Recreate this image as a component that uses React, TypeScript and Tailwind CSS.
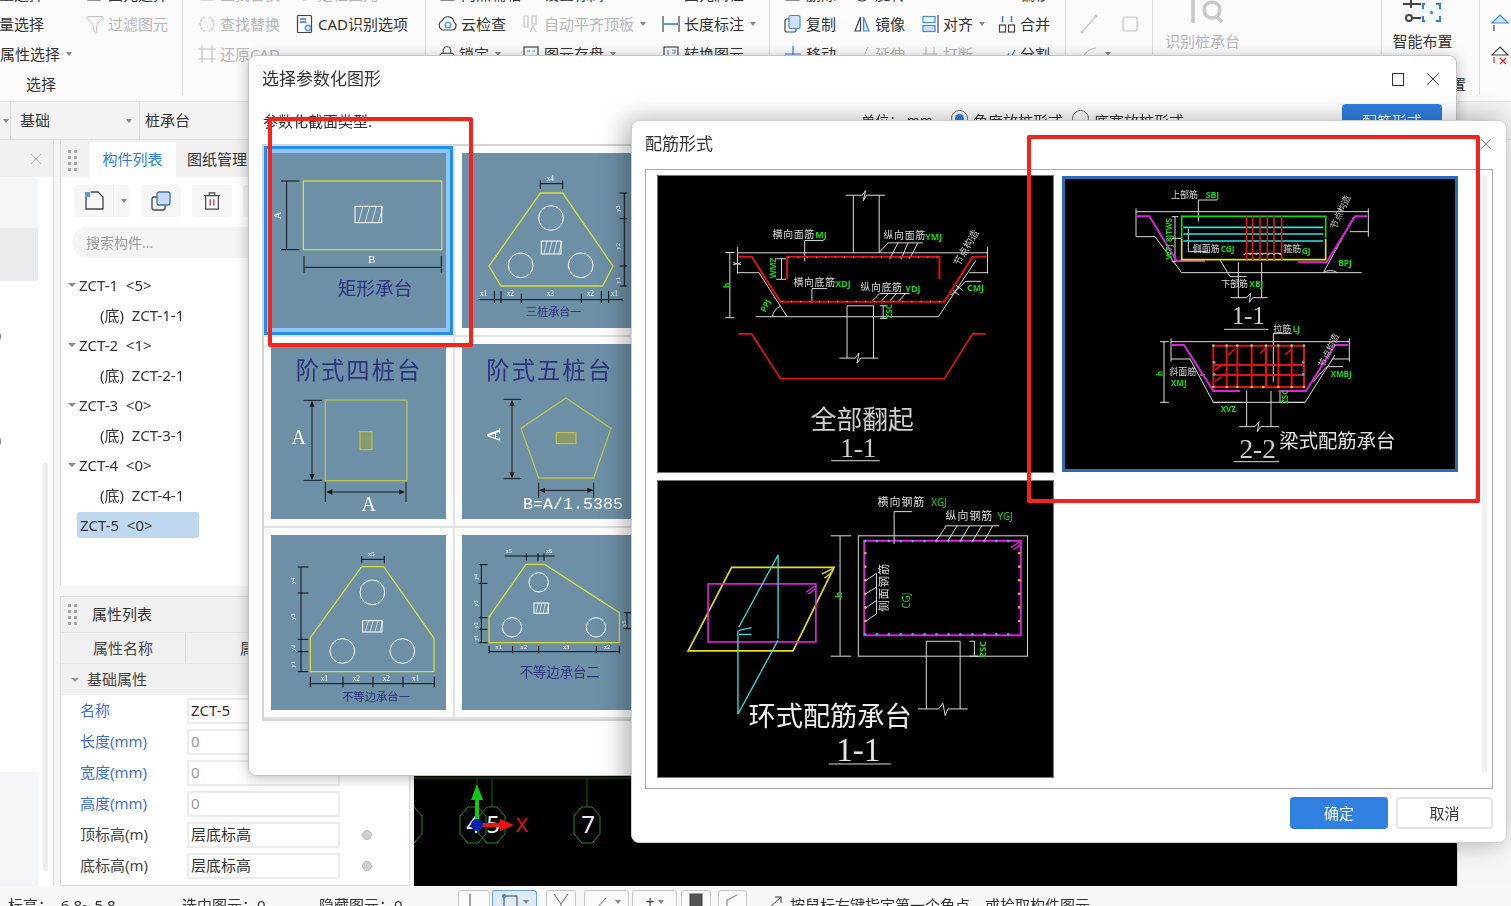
import React from 'react';
import { Filter, Lock, X } from 'lucide-react';

const B = '#5b9bd5';
const YE = '#d6dd3a';
const TB = '#2e3380';
const G = '#12d812';
const W = '#dcdcdc';
const RD = '#e01212';
const MG = '#e020e0';
const CY = '#2fe3e3';
const YL = '#e8e010';

function Caret() {
  return <span className="ml-[3px] inline-block w-0 h-0 border-x-[3px] border-x-transparent border-t-[4px] border-t-[#888]" />;
}

function Ic({ children, off }: { children: React.ReactNode; off?: boolean }) {
  return (
    <svg viewBox="0 0 20 20" className="w-[20px] h-[20px] shrink-0" fill="none" stroke={off ? '#c4c4c4' : '#444'} strokeWidth="1.2">
      {children}
    </svg>
  );
}

function Tool({ icon, label, off, caret, w }: { icon?: React.ReactNode; label?: string; off?: boolean; caret?: boolean; w?: string }) {
  return (
    <div className={'flex items-center h-[30px] shrink-0 gap-[3px] whitespace-nowrap ' + (w || '') + (off ? ' text-[#b6b6b6]' : ' text-[#333]')}>
      {icon}
      {label && <span>{label}</span>}
      {caret && <Caret />}
    </div>
  );
}

function Row({ children }: { children: React.ReactNode }) {
  return <div className="flex h-[30px]">{children}</div>;
}

function Group({ w, title, children }: { w: string; title?: string; children: React.ReactNode }) {
  return (
    <div className={'h-[116px] border-r border-[#dcdcdc] shrink-0 ' + w}>
      {children}
      {title && <div className="h-[26px] pl-[26px] pt-[2px] text-[#333] leading-[26px]">{title}</div>}
    </div>
  );
}

function Ribbon() {
  return (
    <div className="h-[102px] overflow-hidden bg-[#fbfbfb] border-b border-[#e2e2e2] text-[15px]">
      <div className="flex -mt-[21px]">
        <Group w="w-[183px]" title="选择">
          <Row>
            <Tool w="w-[101px] -ml-[16px]" label="批量选择" />
            <Tool icon={<Ic><rect x="3" y="4" width="12" height="12" /></Ic>} label="图元选择" />
          </Row>
          <Row>
            <Tool w="w-[101px] -ml-[16px]" label="批量选择" />
            <Tool off icon={<Filter size={20} strokeWidth={1} />} label="过滤图元" />
          </Row>
          <Row>
            <Tool w="-ml-[15px]" label="按属性选择" caret />
          </Row>
        </Group>
        <Group w="w-[243px] pl-[14px]">
          <Row>
            <Tool off w="w-[98px]" icon={<Ic off><rect x="4" y="4" width="12" height="12" /></Ic>} label="查找替换" />
            <Tool off icon={<Ic off><circle cx="10" cy="10" r="6" /></Ic>} label="定位图元" caret />
          </Row>
          <Row>
            <Tool off w="w-[98px]" icon={
              <Ic off>
                <path d="M8 3 A7.5 7.5 0 0 0 8 17 M12 3 A7.5 7.5 0 0 1 12 17" strokeDasharray="3 1" />
              </Ic>} label="查找替换" />
            <Tool icon={
              <Ic>
                <rect x="2.5" y="1.5" width="14" height="17" rx="1" />
                <path d="M5 5h6M5 8h6" stroke={B} strokeWidth="2" />
                <circle cx="13" cy="14" r="2.6" stroke={B} strokeWidth="1.6" />
              </Ic>} label="CAD识别选项" />
          </Row>
          <Row>
            <Tool off icon={
              <Ic off>
                <path d="M5 1v18M15 1v18M1 5h18M1 15h18" />
              </Ic>} label="还原CAD" />
          </Row>
        </Group>
        <Group w="w-[344px] pl-[12px]">
          <Row>
            <Tool w="w-[83px]" icon={<Ic><rect x="3" y="4" width="13" height="12" /></Ic>} label="两点辅轴" />
            <Tool w="w-[140px]" icon={<Ic><rect x="3" y="5" width="14" height="10" stroke={B} /></Ic>} label="设置标高" />
            <Tool icon={<Ic><path d="M3 15h14" stroke={B} /></Ic>} label="图元属性" />
          </Row>
          <Row>
            <Tool w="w-[83px]" icon={
              <Ic>
                <path d="M5 16a5 5 0 0 1-.5-9.5A6 6 0 0 1 16 8a4.5 4.5 0 0 1-1 8z" />
                <circle cx="10" cy="11" r="2.8" stroke={B} strokeWidth="1.5" />
              </Ic>} label="云检查" />
            <Tool off w="w-[140px]" icon={
              <Ic off>
                <path d="M3 2h4v11H3zM11 2h4v8h-4zM9 18l3-6 3 6" />
              </Ic>} label="自动平齐顶板" caret />
            <Tool icon={
              <Ic>
                <path d="M2 2v16M18 2v16" />
                <path d="M3 10h14" stroke="#2f80e0" strokeWidth="1.6" />
              </Ic>} label="长度标注" caret />
          </Row>
          <Row>
            <Tool w="w-[83px]" icon={<Lock size={18} strokeWidth={1.2} />} label="锁定" caret />
            <Tool w="w-[140px]" icon={<Ic><rect x="3" y="3" width="14" height="14" /><path d="M6 7h3M11 7h3" stroke={B} /></Ic>} label="图元存盘" caret />
            <Tool icon={<Ic><rect x="3" y="3" width="14" height="14" /><path d="M7 6v8M11 6h3v3h-3" stroke={B} /></Ic>} label="转换图元" />
          </Row>
        </Group>
        <Group w="w-[296px] pl-[13px]">
          <Row>
            <Tool w="w-[69px]" icon={<Ic><rect x="3" y="4" width="13" height="12" /></Ic>} label="删除" />
            <Tool w="w-[68px]" icon={<Ic><circle cx="10" cy="10" r="7" /></Ic>} label="旋转" />
            <Tool w="w-[77px]" label="" />
            <Tool icon={<Ic><path d="M3 5h13v10H3z" stroke={B} /></Ic>} label="偏移" />
          </Row>
          <Row>
            <Tool w="w-[69px]" icon={
              <Ic>
                <rect x="2" y="5" width="11" height="13" rx="1.5" />
                <rect x="6" y="1.5" width="11" height="13" rx="1.5" stroke="#3d8be0" fill="#cfe2f7" />
              </Ic>} label="复制" />
            <Tool w="w-[68px]" icon={
              <Ic>
                <path d="M8.5 3 3 17h5.5z" />
                <path d="M11.5 3 17 17h-5.5z" stroke="#3d8be0" fill="#cfe2f7" />
              </Ic>} label="镜像" />
            <Tool w="w-[77px]" icon={
              <Ic>
                <rect x="3" y="2.5" width="12" height="6" stroke="#3d8be0" />
                <rect x="3" y="11.5" width="12" height="6" stroke="#3d8be0" fill="#cfe2f7" />
                <path d="M18 1v18" />
              </Ic>} label="对齐" caret />
            <Tool icon={
              <Ic>
                <rect x="2.5" y="11" width="6" height="7" />
                <rect x="11.5" y="11" width="6" height="7" />
                <path d="M5.5 2v6M14.5 2v6" stroke="#2f80e0" strokeWidth="1.6" />
              </Ic>} label="合并" />
          </Row>
          <Row>
            <Tool w="w-[69px]" icon={
              <Ic>
                <path d="M10 2v16M2 10h16" stroke="#2f80e0" />
              </Ic>} label="移动" />
            <Tool off w="w-[68px]" icon={<Ic off><path d="M2 16h8l6-13" strokeDasharray="2 1" /></Ic>} label="延伸" />
            <Tool off w="w-[77px]" icon={<Ic off><path d="M6 3v14M14 3v14M3 10h14" /></Ic>} label="打断" />
            <Tool icon={<Ic><path d="M2 16h7l3-7M12 16l6-10" stroke="#2f80e0" /></Ic>} label="分割" />
          </Row>
        </Group>
        <Group w="w-[87px] pl-[13px]">
          <Row><Tool w="" /></Row>
          <Row>
            <Tool off w="w-[41px]" icon={<Ic off><path d="M3 18 17 2" /><circle cx="3" cy="18" r="1" /><circle cx="17" cy="2" r="1" /></Ic>} />
            <Tool off icon={<Ic off><rect x="3" y="3" width="14" height="14" rx="2" /></Ic>} />
          </Row>
          <Row>
            <Tool off icon={<Ic off><path d="M3 18A15 15 0 0 1 17 4" /></Ic>} caret />
          </Row>
        </Group>
        <Group w="w-[229px] pl-[12px]">
          <div className="flex flex-col items-start w-[76px] text-[#b6b6b6]">
            <div className="h-[44px] w-full flex items-end justify-center">
              <svg viewBox="0 0 44 44" className="w-[44px] h-[44px]" fill="none" stroke="#c8c8c8" strokeWidth="3.5">
                <path d="M2 3 12 20V44M22 3 12 20" />
                <circle cx="31" cy="31" r="8" />
                <path d="M35 37l6 6" />
              </svg>
            </div>
            <div className="h-[36px] leading-[36px] whitespace-nowrap">识别桩承台</div>
          </div>
        </Group>
        <Group w="w-[98px] pl-[10px]">
          <div className="flex flex-col items-center w-[61px] text-[#333]">
            <div className="h-[44px] w-full flex items-end justify-center">
              <svg viewBox="0 0 40 24" className="w-[40px] h-[24px]" fill="none" stroke="#444" strokeWidth="2">
                <path d="M0 5h18M8 1v8M9 19h9" />
                <circle cx="6" cy="19" r="3" />
                <path d="M22 5h-2v5M33 5h4v5M22 22h-2v-5M33 22h4v-5" stroke="#2f80e0" />
                <circle cx="28.5" cy="13.5" r="1.5" fill="#2f80e0" stroke="none" />
              </svg>
            </div>
            <div className="h-[36px] leading-[36px] whitespace-nowrap">智能布置</div>
          </div>
          <div className="mt-[10px] h-[26px] pt-[2px] leading-[26px] text-[#333] text-right pr-[13px] whitespace-nowrap">智能布置</div>
        </Group>
        <div className="pl-[10px] pt-[34px] flex flex-col gap-[12px]">
          <svg viewBox="0 0 20 20" className="w-[20px] h-[20px]" fill="none" stroke="#444" strokeWidth="1.2">
            <path d="M10 2 18 10H2z" stroke="#3d8be0" fill="#cfe2f7" />
            <path d="M4 12v6" />
          </svg>
          <svg viewBox="0 0 20 20" className="w-[20px] h-[20px]" fill="none" stroke="#444" strokeWidth="1.2">
            <path d="M10 2 18 10H2z" />
            <path d="M4 12v6M10 13l6 6M16 13l-6 6" stroke="#e02020" />
          </svg>
        </div>
      </div>
    </div>
  );
}

function Subbar() {
  return (
    <div className="h-[38px] flex bg-[#f3f3f3] border-b border-[#dedede] text-[15px] text-[#333]">
      <div className="w-[11px] flex items-center border-r border-[#dcdcdc]"><Caret /></div>
      <div className="w-[129px] flex items-center justify-between pl-[9px] pr-[7px] border-r border-[#dcdcdc]"><span>基础</span><Caret /></div>
      <div className="flex items-center pl-[5px]">桩承台</div>
    </div>
  );
}

function Dots() {
  return (
    <div className="grid grid-cols-2 gap-[3px] w-[9px]">
      {[0, 1, 2, 3, 4, 5, 6, 7].map((i) => <i key={i} className="block w-[3px] h-[3px] bg-[#a5a5a5]" />)}
    </div>
  );
}

function TreeRow({ t, child, sel }: { t: string; child?: boolean; sel?: boolean }) {
  if (sel) return <div className="ml-[16px] mt-[2px] h-[26px] w-[122px] pl-[3px] flex items-center bg-[#bfd7ef] rounded-[3px] text-[#333] whitespace-pre">{t}</div>;
  return (
    <div className={'h-[30px] flex items-center text-[#333] whitespace-pre ' + (child ? 'pl-[39px]' : 'pl-[7px]')}>
      {!child && <span className="w-0 h-0 mr-[3px] border-x-[4px] border-x-transparent border-t-[4px] border-t-[#888]" />}
      {t}
    </div>
  );
}

function PropRow({ label, val, blue, muted, dot }: { label: string; val: string; blue?: boolean; muted?: boolean; dot?: boolean }) {
  return (
    <div className="h-[31px] flex items-center">
      <div className={'w-[126px] pl-[19px] ' + (blue ? 'text-[#3f6fd9]' : 'text-[#444]')}>{label}</div>
      <div className={'w-[153px] h-[26px] border-2 border-[#ececec] pl-[2px] flex items-center ' + (muted ? 'text-[#999]' : 'text-[#333]')}>{val}</div>
      {dot && <i className="ml-[22px] block w-[10px] h-[10px] rounded-full bg-[#cfcfcf] border border-[#bcbcbc]" />}
    </div>
  );
}

function Panels() {
  return (
    <div className="flex flex-col w-[350px] ml-[6px] shrink-0 text-[15px]">
      <div className="h-[446px] bg-white border-x border-[#dcdcdc] overflow-hidden">
        <div className="h-[37px] flex bg-[#f0f0f0] pt-[2px]">
          <div className="w-[28px] pl-[7px] pt-[8px]"><Dots /></div>
          <div className="w-[87px] flex items-center justify-center bg-white text-[#2a7de1]">构件列表</div>
          <div className="pl-[11px] flex items-center text-[#333]">图纸管理</div>
        </div>
        <div className="flex pl-[13px] mt-[8px] h-[32px] gap-[11px]">
          <div className="w-[56px] flex rounded-[4px] bg-[#f6f6f6]">
            <div className="w-[40px] flex items-center justify-center border-r border-[#eee]">
              <svg viewBox="0 0 22 22" className="w-[22px] h-[22px]" fill="none" stroke="#444" strokeWidth="1.3">
                <path d="M3 7v12h17V7l-5-5H8" />
                <rect x="2" y="2" width="5" height="5" fill={B} stroke="none" />
              </svg>
            </div>
            <div className="flex-1 flex items-center justify-center"><Caret /></div>
          </div>
          <div className="w-[40px] flex items-center justify-center rounded-[4px] bg-[#f6f6f6]">
            <svg viewBox="0 0 22 22" className="w-[22px] h-[22px]" fill="none" stroke="#444" strokeWidth="1.3">
              <rect x="2" y="7" width="13" height="13" rx="2" />
              <rect x="7" y="2" width="13" height="13" rx="2" stroke="#3d6fb5" fill="#c9dcf5" />
            </svg>
          </div>
          <div className="w-[40px] flex items-center justify-center rounded-[4px] bg-[#f6f6f6]">
            <svg viewBox="0 0 22 22" className="w-[20px] h-[20px]" fill="none" stroke="#444" strokeWidth="1.3">
              <path d="M2 5h18M8 5V2h6v3M4 5v15h14V5" />
              <path d="M9 9v7M13 9v7" stroke="#b03030" />
            </svg>
          </div>
          <div className="w-[40px] rounded-[4px] bg-[#f6f6f6]" />
        </div>
        <div className="ml-[11px] mt-[10px] w-[300px] h-[31px] rounded-full bg-[#f4f4f4] pl-[14px] flex items-center text-[14px] text-[#999]">搜索构件...</div>
        <div className="mt-[12px]">
          <TreeRow t={'ZCT-1  <5>'} />
          <TreeRow child t={'(底)  ZCT-1-1'} />
          <TreeRow t={'ZCT-2  <1>'} />
          <TreeRow child t={'(底)  ZCT-2-1'} />
          <TreeRow t={'ZCT-3  <0>'} />
          <TreeRow child t={'(底)  ZCT-3-1'} />
          <TreeRow t={'ZCT-4  <0>'} />
          <TreeRow child t={'(底)  ZCT-4-1'} />
          <TreeRow sel t={'ZCT-5  <0>'} />
        </div>
      </div>
      <div className="h-[5px] bg-[#f5f5f5]" />
      <div className="flex-1 mt-[5px] bg-white border border-[#dcdcdc]">
        <div className="h-[36px] flex items-center bg-[#f0f0f0] border-b border-[#e2e2e2] pl-[7px]">
          <Dots /><span className="ml-[15px] text-[#333]">属性列表</span>
        </div>
        <div className="h-[31px] flex items-center bg-[#f0f0f0] border-b border-[#e6e6e6] text-[#444]">
          <div className="w-[125px] h-full flex items-center justify-center border-r border-[#dcdcdc]">属性名称</div>
          <div className="w-[153px] text-center">属性值</div>
          <div>附加</div>
        </div>
        <div className="h-[31px] flex items-center bg-[#f0f0f0] pl-[10px] text-[#444]">
          <span className="w-0 h-0 mr-[8px] border-x-[4px] border-x-transparent border-t-[4px] border-t-[#999]" />基础属性
        </div>
        <PropRow blue label="名称" val="ZCT-5" />
        <PropRow blue muted label="长度(mm)" val="0" />
        <PropRow blue muted label="宽度(mm)" val="0" />
        <PropRow blue muted label="高度(mm)" val="0" />
        <PropRow label="顶标高(m)" val="层底标高" dot />
        <PropRow label="底标高(m)" val="层底标高" dot />
      </div>
    </div>
  );
}

function LeftRail() {
  return (
    <div className="w-[54px] shrink-0 bg-white border-r border-[#dcdcdc] flex flex-col">
      <div className="h-[37px] bg-[#f0f0f0] flex items-center justify-end pr-[8px]">
        <X size={18} color="#aaa" strokeWidth={1.2} />
      </div>
      <div className="flex flex-1">
        <div className="w-[38px] flex flex-col bg-white">
          <div className="h-[51px] bg-[#f5f6f8]" />
          <div className="h-[53px] bg-[#e9ebef]" />
          <div className="h-[44px]" />
          <div className="h-[20px] -ml-[3px] text-[#444] text-[14px] leading-[20px]">)</div>
          <div className="h-[85px]" />
          <div className="h-[20px] -ml-[3px] text-[#444] text-[14px] leading-[20px]">)</div>
          <div className="mt-auto h-[114px] bg-[#f3f5f7]" />
        </div>
        <div className="ml-[5px] mt-[286px] mb-[15px] w-[5px] rounded-full bg-[#ececec]" />
      </div>
    </div>
  );
}

function Canvas() {
  const oct = (cx: number) => `${cx - 5},807 ${cx + 5},807 ${cx + 13},816 ${cx + 13},834 ${cx + 5},843 ${cx - 5},843 ${cx - 13},834 ${cx - 13},816`;
  return (
    <div className="flex-1 ml-[4px] bg-black">
      <svg viewBox="414 140 1043 745" className="block w-[1043px] h-[745px]" fill="none">
        <path d="M414 778H1457M477 778V807M492 778V807M587 778V807" stroke="#0a6a0a" strokeWidth="1" />
        <polygon points={oct(409)} stroke="#1d8a1d" />
        <polygon points={oct(473)} stroke="#1d8a1d" />
        <polygon points={oct(492)} stroke="#1d8a1d" />
        <polygon points={oct(587)} stroke="#1d8a1d" />
        <text x="473" y="833" fontSize="24" fill="#eee" textAnchor="middle" stroke="none">4</text>
        <text x="493" y="833" fontSize="24" fill="#eee" textAnchor="middle" stroke="none">5</text>
        <text x="588" y="833" fontSize="24" fill="#eee" textAnchor="middle" stroke="none">7</text>
        <path d="M477 825V798" stroke="#13c713" strokeWidth="4" />
        <path d="M477 784l-6 16h12z" fill="#13c713" />
        <path d="M477 825H503" stroke="#ee1111" strokeWidth="4" />
        <path d="M514 825l-14-6v12z" fill="#ee1111" />
        <circle cx="477" cy="825" r="6" fill="#0a1eb0" />
        <text x="516" y="832" fontSize="20" fill="#ee1111" stroke="none">X</text>
      </svg>
    </div>
  );
}

function StatusBar() {
  const btn = 'h-[24px] border border-[#c8c8c8] rounded-[3px] bg-[#fafafa] shrink-0 flex items-center justify-center';
  return (
    <div className="h-[20px] overflow-hidden flex items-start bg-[#f8f8f8] text-[15px] text-[#333]">
      <span className="ml-[8px] mt-[8px] w-[174px] whitespace-pre">{'标高：  6.8~ 5.8'}</span>
      <span className="mt-[8px] w-[137px] whitespace-nowrap">选中图元：0</span>
      <span className="mt-[8px] w-[139px] whitespace-nowrap">隐藏图元：0</span>
      <div className="flex mt-[4px]">
        <div className={btn + ' w-[32px] mr-[2px]'}>
          <svg viewBox="0 0 16 20" className="w-[16px] h-[20px]" fill="none" stroke="#444"><path d="M4 2v14h8" /></svg>
        </div>
        <div className={btn + ' w-[45px] mr-[9px] !border-[#6ba3e3] !bg-[#dceafa]'}>
          <svg viewBox="0 0 20 20" className="w-[20px] h-[20px]" fill="none" stroke="#444"><rect x="4" y="4" width="13" height="14" /><circle cx="4" cy="4" r="2" fill="#2f80e0" stroke="none" /></svg>
          <Caret />
        </div>
        <div className={btn + ' w-[30px] mr-[8px]'}>
          <svg viewBox="0 0 20 20" className="w-[20px] h-[20px]" fill="none" stroke="#666"><path d="M3 2 10 12M17 2 10 12v8" /></svg>
        </div>
        <div className={btn + ' w-[45px] mr-[3px]'}>
          <svg viewBox="0 0 20 20" className="w-[20px] h-[20px]" fill="none" stroke="#666"><path d="M3 18 14 6" /></svg>
          <Caret />
        </div>
        <div className={btn + ' w-[45px] mr-[4px]'}>
          <span className="text-[#444] text-[16px] leading-[16px]">+</span><Caret />
        </div>
        <div className={btn + ' w-[30px] mr-[7px]'}>
          <svg viewBox="0 0 20 20" className="w-[20px] h-[20px]" fill="none" stroke="#444"><rect x="4" y="2" width="12" height="16" fill="#555" /></svg>
        </div>
        <div className={btn + ' w-[29px]'}>
          <svg viewBox="0 0 20 20" className="w-[20px] h-[20px]" fill="none" stroke="#777"><path d="M4 18V8l10-5" /></svg>
        </div>
      </div>
      <svg viewBox="0 0 24 16" className="ml-[18px] mt-[9px] w-[24px] h-[16px]" fill="none" stroke="#333"><path d="M2 15 L16 2M10 2h6v6" /></svg>
      <span className="ml-[1px] mt-[8px] whitespace-nowrap">按鼠标左键指定第一个角点，或拾取构件图元</span>
    </div>
  );
}

function Hatch({ x, y, w, h, color = '#fff', fill = 'none' }: { x: number; y: number; w: number; h: number; color?: string; fill?: string }) {
  const d = [0.25, 0.5, 0.75, 1].map((k) => `M${x + w * k - w * 0.12} ${y + h}L${x + w * k + w * 0.05} ${y}`).join('');
  return (
    <g stroke={color} strokeWidth="3" fill={fill}>
      <rect x={x} y={y} width={w} height={h} />
      <path d={d} strokeWidth="2" />
    </g>
  );
}

function T({ x, y, s, c, t, rot, a, serif, sp, w }: { x: number; y: number; s: number; c: string; t: string; rot?: number; a?: 'middle' | 'start'; serif?: boolean; sp?: number; w?: number }) {
  return (
    <text
      x={x}
      y={y}
      fontSize={s}
      fill={c}
      stroke="none"
      textAnchor={a || 'middle'}
      fontWeight={w}
      letterSpacing={sp}
      fontFamily={serif ? "'Liberation Serif','Noto Sans CJK SC',serif" : undefined}
      transform={rot ? `rotate(${rot} ${x} ${y})` : undefined}
    >
      {t}
    </text>
  );
}

function Thumb({ vb, children }: { vb: string; children: React.ReactNode }) {
  return (
    <svg viewBox={vb} className="block w-[175px] h-[175px] bg-[#6d90a7]" fill="none">
      {children}
    </svg>
  );
}

function Cell({ sel, children }: { sel?: boolean; children: React.ReactNode }) {
  return (
    <div className={'relative p-[7px] border-r-2 border-b-2 border-[#e2e2e2] ' + (sel ? 'bg-[#8fc6f6] shadow-[inset_0_0_0_3px_#1e8ff0,inset_0_0_0_6px_#8fc6f6]' : 'bg-white')}>
      {children}
    </div>
  );
}

function Gallery() {
  return (
    <div className="grid grid-cols-[191px_191px] grid-rows-[191px_191px_191px] w-[1180px] h-[577px] border-2 border-[#d5d5d5] ml-[13px]">
      <Cell sel>
        <Thumb vb="33 38 525 525">
          <rect x="130" y="122" width="415" height="206" stroke={YE} strokeWidth="4" />
          <path d="M80 122V328M63 122H118M63 328H118M132 347V397M544 347V397M132 381H544" stroke="#111" strokeWidth="3" />
          <T x={64} y={225} s={32} c="#fff" t="A" rot={-90} serif />
          <T x={335} y={368} s={34} c="#fff" t="B" serif />
          <Hatch x={285} y={198} w={80} h={49} />
          <T x={345} y={465} s={56} c={TB} t="矩形承台" />
        </Thumb>
      </Cell>
      <Cell>
        <Thumb vb="605 38 525 525">
          <polygon points="840,158 907,158 1058,377 1027,437 722,437 686,377" stroke={YE} strokeWidth="4" />
          <circle cx="872" cy="233" r="37" stroke="#fff" strokeWidth="3" />
          <circle cx="781" cy="375" r="37" stroke="#fff" strokeWidth="3" />
          <circle cx="961" cy="375" r="37" stroke="#fff" strokeWidth="3" />
          <Hatch x={843} y={302} w={59} h={39} />
          <path d="M840 130H907M840 120V146M907 120V146M1092 158V437M1078 158H1100M1078 235H1100M1078 377H1100M1078 437H1100M655 478H1088M702 452V488M722 452V488M783 460V488M963 460V488M1023 452V488M1045 452V488" stroke="#111" strokeWidth="3" />
          <T x={870} y={122} s={22} c="#fff" t="x4" serif />
          <T x={1078} y={205} s={20} c="#fff" t="y3" rot={-90} serif />
          <T x={1078} y={318} s={20} c="#fff" t="y2" rot={-90} serif />
          <T x={1078} y={420} s={20} c="#fff" t="y1" rot={-90} serif />
          <T x={670} y={468} s={22} c="#fff" t="x1" serif />
          <T x={750} y={468} s={22} c="#fff" t="x2" serif />
          <T x={870} y={468} s={22} c="#fff" t="x3" serif />
          <T x={990} y={468} s={22} c="#fff" t="x2" serif />
          <T x={1062} y={468} s={22} c="#fff" t="x1" serif />
          <T x={880} y={528} s={33} c={TB} t="三桩承台一" />
        </Thumb>
      </Cell>
      <Cell>
        <Thumb vb="32 14 525 525">
          <T x={296} y={120} s={70} c={TB} t="阶式四桩台" sp={6} />
          <rect x="195" y="182" width="245" height="242" stroke="#b9c24f" strokeWidth="4" />
          <rect x="299" y="277" width="36" height="54" fill="#8a9a6a" stroke="#c7c74f" strokeWidth="3" />
          <path d="M155 190V416M130 183H185M130 423H185M205 458H428M195 428V488M437 428V488" stroke="#1a1a1a" strokeWidth="3" />
          <path d="M155 184l-8 18h16zM155 422l-8-18h16zM198 458l18-8v16zM434 458l-18-8v16z" fill="#1a1a1a" />
          <T x={115} y={315} s={60} c="#fff" t="A" serif />
          <T x={325} y={515} s={60} c="#fff" t="A" serif />
        </Thumb>
      </Cell>
      <Cell>
        <Thumb vb="605 14 525 525">
          <T x={868} y={120} s={70} c={TB} t="阶式五桩台" sp={6} />
          <polygon points="917,176 1052,267 1000,416 835,416 782,267" stroke="#b9c24f" strokeWidth="4" />
          <rect x="888" y="280" width="59" height="33" fill="#8a9a6a" stroke="#c7c74f" strokeWidth="3" />
          <path d="M755 185V414M730 180H783M730 418H783M842 453H995M835 430V475M1000 430V475" stroke="#1a1a1a" strokeWidth="3" />
          <path d="M755 181l-8 18h16zM755 417l-8-18h16zM836 453l18-8v16zM999 453l-18-8v16z" fill="#1a1a1a" />
          <T x={718} y={287} s={58} c="#fff" t="A" rot={-90} serif />
          <text x="788" y="510" fontSize="50" fill="#fff" fontFamily="'Liberation Mono',monospace" stroke="none">B=A/1.5385</text>
        </Thumb>
      </Cell>
      <Cell>
        <Thumb vb="32 587 525 525">
          <polygon points="304,682 370,682 521,897 521,997 150,997 150,895" stroke={YE} strokeWidth="4" />
          <circle cx="336" cy="759" r="37" stroke="#fff" strokeWidth="3" />
          <circle cx="246" cy="935" r="37" stroke="#fff" strokeWidth="3" />
          <circle cx="426" cy="935" r="37" stroke="#fff" strokeWidth="3" />
          <Hatch x={307} y={844} w={58} h={34} />
          <path d="M122 683V997M112 683H144M112 761H144M112 900H144M112 937H144M112 997H144M150 1033H522M150 1012V1044M248 1012V1044M338 1012V1044M428 1012V1044M522 1012V1044M304 660H372M304 650V672M372 650V672" stroke="#111" strokeWidth="3" />
          <T x={333} y={650} s={20} c="#fff" t="x5" serif />
          <T x={192} y={1024} s={22} c="#fff" t="x1" serif />
          <T x={288} y={1024} s={22} c="#fff" t="x2" serif />
          <T x={378} y={1024} s={22} c="#fff" t="x2" serif />
          <T x={466} y={1024} s={22} c="#fff" t="x1" serif />
          <T x={105} y={725} s={20} c="#fff" t="y4" rot={-90} serif />
          <T x={105} y={832} s={20} c="#fff" t="y3" rot={-90} serif />
          <T x={105} y={926} s={20} c="#fff" t="y2" rot={-90} serif />
          <T x={105} y={975} s={20} c="#fff" t="y1" rot={-90} serif />
          <T x={347} y={1084} s={34} c={TB} t="不等边承台一" />
        </Thumb>
      </Cell>
      <Cell>
        <Thumb vb="605 587 525 525">
          <polygon points="797,675 853,675 1077,820 1077,910 686,910 686,833" stroke={YE} strokeWidth="4" />
          <circle cx="835" cy="729" r="29" stroke="#fff" strokeWidth="3" />
          <circle cx="755" cy="864" r="29" stroke="#fff" strokeWidth="3" />
          <circle cx="1007" cy="864" r="29" stroke="#fff" strokeWidth="3" />
          <Hatch x={821} y={791} w={43} h={31} />
          <path d="M663 676V910M655 676H682M655 732H682M655 835H682M655 870H682M655 910H682M686 937H1077M686 920V942M757 920V942M835 920V942M1008 920V942M1077 920V942M733 650H883M798 642V664M833 642V664M851 642V664M1100 820V868M1090 820H1112M1090 868H1112" stroke="#111" strokeWidth="3" />
          <T x={745} y={642} s={18} c="#fff" t="x5" serif />
          <T x={866} y={642} s={18} c="#fff" t="x6" serif />
          <T x={715} y={928} s={20} c="#fff" t="x1" serif />
          <T x={790} y={928} s={20} c="#fff" t="x2" serif />
          <T x={917} y={928} s={20} c="#fff" t="x3" serif />
          <T x={1040} y={928} s={20} c="#fff" t="x2" serif />
          <T x={652} y={712} s={17} c="#fff" t="y4" rot={-90} serif />
          <T x={652} y={792} s={17} c="#fff" t="y3" rot={-90} serif />
          <T x={652} y={858} s={17} c="#fff" t="y2" rot={-90} serif />
          <T x={652} y={895} s={17} c="#fff" t="y1" rot={-90} serif />
          <T x={1098} y={852} s={17} c="#fff" t="y5" rot={-90} serif />
          <T x={898} y={1013} s={40} c={TB} t="不等边承台二" />
        </Thumb>
      </Cell>
    </div>
  );
}

function Dots2({ pts, c, r = 2.5 }: { pts: [number, number][]; c: string; r?: number }) {
  return <g fill={c} stroke="none">{pts.map(([x, y], i) => <circle key={i} cx={x} cy={y} r={r} />)}</g>;
}

const range = (a: number, b: number, s: number) => {
  const o: number[] = [];
  for (let v = a; v <= b; v += s) o.push(v);
  return o;
};

function CadOne() {
  return (
    <svg viewBox="6 0 1191 894" className="block w-full h-full bg-black" fill="none">
      <g stroke={W} strokeWidth="3">
        <path d="M595 58V232M673 58V232M572 58H622L632 44L625 75L635 58H690" />
        <path d="M245 232H1000M245 215V295M245 292H310L395 425M300 425H852L965 255M945 292H1000M1000 215V295" />
        <path d="M576 392V550M656 392V550M576 392H656M553 550H600L612 535L606 565L618 550H670" />
        <path d="M222 230V428M208 231H236M208 428H236M232 262l24 6M232 268l24-6" />
        <path d="M448 258V195H505M672 232L700 202H805M705 250L730 202M740 250L760 202M765 250L790 202" />
        <path d="M470 385V340H515M652 378L675 355H765M680 378L700 355M705 378L725 355M732 378L752 355" />
        <path d="M378 250V312M362 250H392M362 312H392M350 425A45 45 0 0 1 375 393" />
        <path d="M685 392V430M675 392H698M675 430H698M890 360L935 318H980M905 330L925 345M895 345L915 360" />
      </g>
      <path d="M248 244H288L375 380H870L955 244H997" stroke={RD} strokeWidth="6" />
      <path d="M395 312V244H855V312" stroke={RD} strokeWidth="6" />
      <path d="M248 477H288L375 612H870L955 477H995" stroke={RD} strokeWidth="5" />
      <Dots2 pts={range(400, 850, 28).map((x) => [x, 245] as [number, number])} c="#e0b030" r={2} />
      <Dots2 pts={range(380, 870, 28).map((x) => [x, 379] as [number, number])} c="#e0b030" r={2} />
      <T x={415} y={187} s={30} c="#ddd" t="横向面筋" sp={2} />
      <T x={480} y={187} s={27} c={G} t="MJ" a="start" w={700} />
      <T x={750} y={190} s={30} c="#ddd" t="纵向面筋" sp={2} />
      <T x={812} y={192} s={27} c={G} t="YMJ" a="start" w={700} />
      <T x={478} y={333} s={30} c="#ddd" t="横向底筋" sp={2} />
      <T x={540} y={335} s={27} c={G} t="XDJ" a="start" w={700} />
      <T x={680} y={348} s={30} c="#ddd" t="纵向底筋" sp={2} />
      <T x={752} y={349} s={27} c={G} t="YDJ" a="start" w={700} />
      <T x={938} y={347} s={27} c={G} t="CMJ" a="start" w={700} />
      <T x={945} y={222} s={30} c="#ccc" t="节点构造" rot={-60} />
      <T x={338} y={395} s={25} c={G} t="PPJ" rot={-65} w={700} />
      <T x={360} y={278} s={25} c={G} t="WMZ" rot={-90} w={700} />
      <T x={222} y={330} s={25} c={G} t="h" rot={-90} w={700} />
      <T x={712} y={408} s={24} c={G} t="ZSC" rot={-90} w={700} />
      <T x={622} y={764} s={78} c="#cfcfcf" t="全部翻起" />
      <T x={610} y={850} s={82} c="#cfcfcf" t="1-1" serif />
      <path d="M528 860H675" stroke="#ddd" strokeWidth="3" />
    </svg>
  );
}

function CadTwo() {
  return (
    <svg viewBox="15 12 1170 870" className="block w-full h-full bg-black" fill="none">
      <g stroke={W} strokeWidth="3">
        <path d="M228 110H925M228 100V185M925 100V185M228 185H285L365 293H905M790 293L882 125M870 170H925M790 293A40 40 0 0 1 832 293" />
        <path d="M535 262V368M605 262V368M512 368H560L572 355L568 382L578 368H622" />
        <path d="M415 140V75H470M385 160V230H440M480 254L510 305H560M555 235H665" />
        <path d="M345 125V260M335 125H355M335 190H365M335 260H355" />
        <path d="M333 500H868M333 490V560M868 490V560M333 552H390L460 682H735L825 540M815 552H870" />
        <path d="M312 500V682M300 500H326M300 682H326M460 682H545M560 648V755M633 648V755M538 755H585L597 740L592 770L602 755H658" />
        <path d="M640 620V475H695M435 600H420M760 620L800 575H850M660 650V682H735" />
      </g>
      <path d="M228 124H268L350 258H435M715 262H800L885 124H922" stroke={MG} strokeWidth="6" />
      <path d="M365 190V124H797V188" stroke={G} strokeWidth="5" />
      <path d="M365 192V254H797V192" stroke={YL} strokeWidth="5" />
      <path d="M370 157H790M370 177H790M370 198H790" stroke={CY} strokeWidth="5" />
      <path d="M560 124V254M578 124V254M600 124V254M622 124V254M642 124V254M665 124V254" stroke={RD} strokeWidth="5" />
      <path d="M550 238H670" stroke="#ddd" strokeWidth="3" strokeDasharray="6 12" />
      <path d="M333 510H372L460 648H540M655 648H738L825 510H865" stroke={MG} strokeWidth="6" />
      <path d="M460 512H732M460 570H732M460 600H732M460 636H732M460 510V638M500 510V638M532 510V638M575 510V638M618 510V638M655 510V638M695 510V638M732 510V638" stroke={RD} strokeWidth="6" />
      <path d="M505 540l20-18M600 535l20-18M675 540l20-18M465 585l20-15M465 620l20-15" stroke={RD} strokeWidth="5" />
      <Dots2 pts={[460, 500, 532, 575, 618, 655, 695, 732].map((x) => [x, 512] as [number, number])} c="#7fd07f" r={4} />
      <Dots2 pts={[460, 500, 532, 575, 610, 655, 695, 732].map((x) => [x, 636] as [number, number])} c="#e8c020" r={4} />
      <Dots2 pts={[[462, 562], [462, 598], [730, 562], [730, 598]]} c="#40c0e0" r={4} />
      <T x={333} y={70} s={27} c="#ddd" t="上部筋" a="start" />
      <T x={437} y={70} s={26} c={G} t="SBJ" a="start" w={700} />
      <T x={398} y={230} s={27} c="#ddd" t="侧面筋" a="start" />
      <T x={482} y={230} s={25} c={G} t="CGJ" a="start" w={700} />
      <T x={670} y={230} s={27} c="#ddd" t="箍筋" a="start" />
      <T x={725} y={236} s={25} c={G} t="GJ" a="start" w={700} />
      <T x={483} y={335} s={27} c="#ddd" t="下部筋" a="start" />
      <T x={568} y={336} s={25} c={G} t="XBJ" a="start" w={700} />
      <T x={835} y={272} s={25} c={G} t="BPJ" a="start" w={700} />
      <T x={335} y={165} s={24} c={G} t="8JTWS" rot={-90} w={700} />
      <T x={335} y={230} s={24} c={G} t="WTJ" rot={-90} w={700} />
      <T x={850} y={115} s={27} c="#ccc" t="节点构造" rot={-65} />
      <T x={565} y={448} s={74} c="#cfcfcf" t="1-1" serif />
      <path d="M492 463H625" stroke="#ddd" strokeWidth="3" />
      <T x={640} y={472} s={27} c="#ddd" t="拉筋" a="start" />
      <T x={698} y={472} s={25} c={G} t="LJ" a="start" w={700} />
      <T x={815} y={530} s={27} c="#ccc" t="节点构造" rot={-65} />
      <T x={328} y={600} s={27} c="#ddd" t="斜面筋" a="start" />
      <T x={333} y={632} s={24} c={G} t="XMJ" a="start" w={700} />
      <T x={812} y={605} s={24} c={G} t="XMBJ" a="start" w={700} />
      <T x={482} y={711} s={24} c={G} t="XVZ" a="start" w={700} />
      <T x={308} y={595} s={24} c={G} t="h" rot={-90} w={700} />
      <T x={685} y={665} s={24} c={G} t="ZSC" rot={-90} w={700} />
      <T x={593} y={848} s={82} c="#cfcfcf" t="2-2" serif />
      <path d="M522 860H657" stroke="#ddd" strokeWidth="3" />
      <T x={658} y={818} s={58} c="#e4e4e4" t="梁式配筋承台" a="start" />
    </svg>
  );
}

function CadThree() {
  const topD = range(630, 1095, 36).map((x) => [x, 186] as [number, number]);
  const botD = range(630, 1095, 36).map((x) => [x, 467] as [number, number]);
  const side = range(222, 430, 41);
  return (
    <svg viewBox="6 6 1191 890" className="block w-full h-full bg-black" fill="none">
      <path d="M228 265H537L413 517H97Z" stroke={YL} strokeWidth="5" />
      <path d="M500 285L535 268M508 298L530 280" stroke={YL} strokeWidth="4" />
      <rect x="157" y="315" width="325" height="175" stroke={MG} strokeWidth="5" />
      <path d="M452 340L478 322M460 345L480 330" stroke={MG} strokeWidth="4" />
      <path d="M368 228V480M368 228L250 445M247 455V708M247 708L368 485M250 455L288 447M250 467H288" stroke={CY} strokeWidth="4" />
      <rect x="610" y="170" width="510" height="363" stroke={W} strokeWidth="3" />
      <rect x="628" y="185" width="472" height="285" stroke={MG} strokeWidth="6" />
      <path d="M1070 205L1098 188M1078 212L1098 198" stroke={MG} strokeWidth="4" />
      <Dots2 pts={topD} c="#35b8e0" r={4} />
      <Dots2 pts={botD} c="#35b8e0" r={4} />
      <Dots2 pts={side.map((y) => [631, y] as [number, number])} c="#e8b020" r={4} />
      <Dots2 pts={side.map((y) => [1095, y] as [number, number])} c="#e8b020" r={4} />
      <g stroke={W} strokeWidth="3">
        <path d="M718 195V97H772M845 185L875 140H1035M880 185L908 140M918 185L945 140M955 185L982 140M990 185L1015 140" />
        <path d="M555 170V533M527 170H588M527 533H588M632 305L665 283V405L632 428M632 345L665 325M632 388L665 365" />
        <path d="M815 488V692M917 488V692M815 488H917M790 692H852L865 675L872 712L880 692H940M945 488H960V533M945 533H975" />
      </g>
      <T x={740} y={80} s={33} c="#ddd" t="横向钢筋" sp={3} />
      <T x={830} y={80} s={30} c={G} t="XGJ" a="start" />
      <T x={945} y={122} s={33} c="#ddd" t="纵向钢筋" sp={3} />
      <T x={1030} y={122} s={30} c={G} t="YGJ" a="start" />
      <T x={700} y={325} s={34} c="#ddd" t="侧面钢筋" rot={-90} sp={3} />
      <T x={765} y={365} s={30} c={G} t="CGJ" rot={-90} />
      <T x={562} y={348} s={28} c={G} t="h" rot={-90} w={700} />
      <T x={995} y={512} s={28} c={G} t="ZSC" rot={-90} w={700} />
      <T x={525} y={743} s={82} c="#efefef" t="环式配筋承台" />
      <T x={610} y={850} s={100} c="#e4e4e4" t="1-1" serif />
      <path d="M522 858H708" stroke="#ddd" strokeWidth="3" />
    </svg>
  );
}

function Dialog1() {
  return (
    <div className="absolute left-[248px] top-[55px] w-[1209px] h-[721px] bg-white rounded-[8px] border border-[#c4c4c4] shadow-[0_2px_14px_rgba(0,0,0,0.28)] text-[15px] text-[#333]">
      <div className="h-[48px] flex items-center justify-between pl-[13px] pr-[12px] pb-[2px]">
        <span className="text-[17px]">选择参数化图形</span>
        <div className="flex items-center gap-[18px]">
          <i className="block w-[12px] h-[13px] border border-[#333]" />
          <X size={22} strokeWidth={1} color="#333" />
        </div>
      </div>
      <div className="h-[40px] flex items-start justify-between pl-[14px] pr-[14px]">
        <span className="mt-[6px]">参数化截面类型:</span>
        <div className="flex items-start">
          <span className="mt-[6px] mr-[18px] text-[14px]">单位： mm</span>
          <div className="mt-[6px] w-[17px] h-[17px] rounded-full border border-[#666] flex items-center justify-center mr-[5px]"><i className="block w-[9px] h-[9px] rounded-full bg-[#2f80e0]" /></div>
          <span className="mt-[6px] mr-[9px]">角度放桩形式</span>
          <div className="mt-[6px] w-[17px] h-[17px] rounded-full border border-[#666] mr-[5px]" />
          <span className="mt-[6px] mr-[158px]">底宽放桩形式</span>
          <div className="w-[100px] h-[34px] rounded-[4px] bg-[#2f80e0] text-white flex items-center justify-center">配筋形式</div>
        </div>
      </div>
      <Gallery />
    </div>
  );
}

function Dialog2() {
  return (
    <div className="absolute left-[631px] top-[120px] w-[876px] h-[723px] bg-white rounded-[8px] border border-[#cfcfcf] shadow-[-6px_0_26px_rgba(0,0,0,0.32)] text-[15px] text-[#333]">
      <div className="h-[48px] flex items-center justify-between pl-[13px] pr-[11px] pb-[2px]">
        <span className="text-[17px]">配筋形式</span>
        <X size={18} strokeWidth={1.2} color="#777" />
      </div>
      <div className="mx-[13px] h-[620px] border border-[#aaaaaa] flex">
        <div className="grid grid-cols-[397px_396px] grid-rows-[298px_298px] gap-x-[8px] gap-y-[7px] pl-[11px] pt-[5px] w-[836px] shrink-0">
          <div className="border border-[#777]"><CadOne /></div>
          <div className="mt-[1px] h-[296px] border-[3px] border-[#2b6dbb]"><CadTwo /></div>
          <div className="border border-[#777]"><CadThree /></div>
        </div>
        <div className="mt-[5px] mb-[15px] w-[5px] rounded-full bg-[#f0f0f0]" />
      </div>
      <div className="flex justify-end gap-[8px] px-[13px] mt-[8px]">
        <div className="w-[98px] h-[32px] rounded-[4px] bg-[#2f80e0] text-white flex items-center justify-center">确定</div>
        <div className="w-[97px] h-[32px] rounded-[4px] bg-white border-2 border-[#e5e5e5] text-[#333] flex items-center justify-center">取消</div>
      </div>
    </div>
  );
}

export default function App() {
  return (
    <div className="relative w-[1511px] h-[906px] overflow-hidden bg-[#f5f5f5] font-['Noto_Sans','Noto_Sans_CJK_SC',sans-serif]">
      <div className="w-full h-full flex flex-col relative blur-[0.45px]">
        <Ribbon />
        <Subbar />
        <div className="flex h-[746px]">
          <LeftRail />
          <Panels />
          <Canvas />
          <div className="w-[54px] bg-[#f6f6f6] border-l border-[#e0e0e0]" />
        </div>
        <StatusBar />
        <Dialog1 />
        <Dialog2 />
      </div>
      <div className="absolute left-[268px] top-[117px] w-[205px] h-[230px] border-[4px] border-[#f5231b] rounded-[2px]" />
      <div className="absolute left-[1027px] top-[135px] w-[453px] h-[368px] border-[4px] border-[#f5231b] rounded-[2px]" />
    </div>
  );
}
